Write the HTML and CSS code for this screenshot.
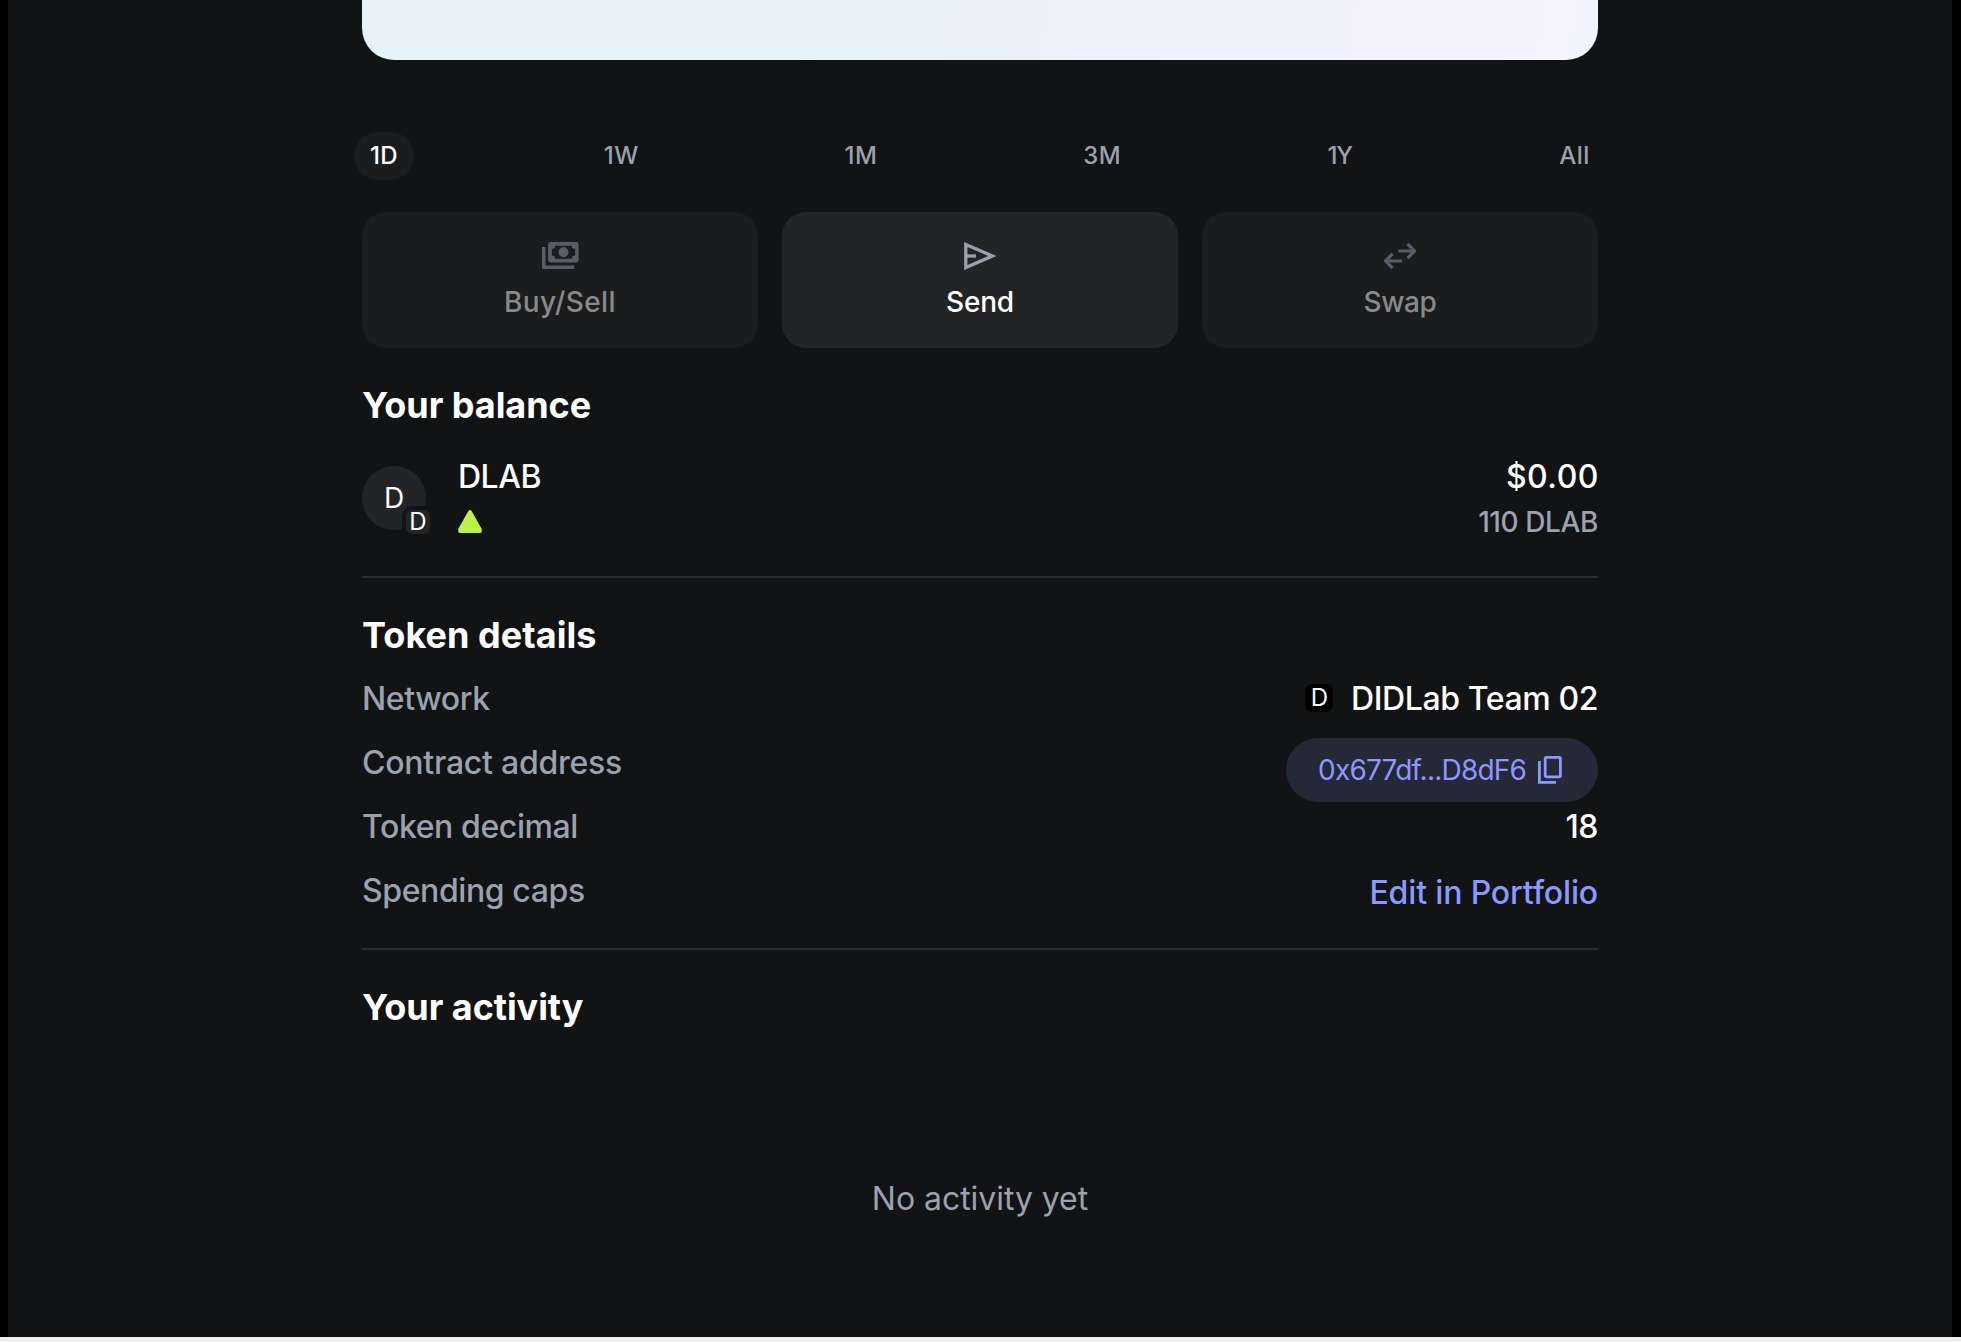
FILE: index.html
```
<!DOCTYPE html>
<html lang="en">
<head>
<meta charset="utf-8">
<title>DLAB</title>
<link rel="stylesheet" href="styles.css">
</head>
<body>
<main class="page">
  <div class="content">
    <div class="chart"></div>

    <nav class="ranges">
      <button class="range range-active">1D</button>
      <button class="range">1W</button>
      <button class="range">1M</button>
      <button class="range">3M</button>
      <button class="range">1Y</button>
      <button class="range">All</button>
    </nav>

    <div class="actions">
      <button class="action action-disabled">
        <svg width="37" height="28" viewBox="0 0 37 28" fill="currentColor">
          <path fill-rule="evenodd" d="M8.5 0H34.2Q36.6 0 36.6 2.4V18Q36.6 20.4 34.2 20.4H8.5Q6.1 20.4 6.1 18V2.4Q6.1 0 8.5 0ZM13.2 3.7Q13.2 7 9.9 7V13.4Q13.2 13.4 13.2 16.7H29.8Q29.8 13.4 33.1 13.4V7Q29.8 7 29.8 3.7Z"/>
          <circle cx="21.5" cy="10.2" r="5"/>
          <path d="M0 5H3.5V23.5H32.3V27H1.6Q0 27 0 25.4Z"/>
        </svg>
        <span>Buy/Sell</span>
      </button>
      <button class="action">
        <svg width="32" height="28" viewBox="0 0 32 28" fill="none" stroke="currentColor" stroke-width="3.3">
          <path d="M1.8 2.4L28.3 14L1.8 25.6Z"/>
          <path d="M2 14H12"/>
        </svg>
        <span>Send</span>
      </button>
      <button class="action action-disabled action-swap">
        <svg width="32" height="28" viewBox="0 0 32 28" fill="none" stroke="currentColor" stroke-width="3.2">
          <path d="M14.3 9H30M23.5 1.8L30.7 9L23.5 16.2"/>
          <path d="M18 19H2M8.7 11.8L1.5 19L8.7 26.2"/>
        </svg>
        <span>Swap</span>
      </button>
    </div>

    <section class="balance">
      <h2>Your balance</h2>
      <div class="asset">
        <div class="avatar">D<span class="badge">D</span></div>
        <div class="asset-name">
          <div class="primary">DLAB</div>
          <div class="secondary trend">
            <svg width="24" height="24" viewBox="0 0 24 24" fill="#baf24a"><path d="M10.1 1.4Q12-1.2 13.9 1.4L23.5 18.6Q24.6 23 22 23H2Q-.6 23 .5 18.6Z"/></svg>
          </div>
        </div>
        <div class="asset-value">
          <div class="primary fiat">$0.00</div>
          <div class="secondary">110 DLAB</div>
        </div>
      </div>
    </section>

    <section class="details">
      <h2>Token details</h2>
      <dl class="rows">
        <div class="row"><dt>Network</dt><dd class="network"><span class="network-icon">D</span>DIDLab Team 02</dd></div>
        <div class="row"><dt>Contract address</dt><dd><button class="address"><span>0x677df...D8dF6</span>
          <svg width="24" height="28" viewBox="0 0 24 28" fill="none" stroke="currentColor" stroke-width="2.8"><rect x="7.2" y="1.4" width="15.2" height="19.4" rx="1.2"/><path d="M1.4 5V26.4H18"/></svg>
        </button></dd></div>
        <div class="row"><dt>Token decimal</dt><dd>18</dd></div>
        <div class="row"><dt>Spending caps</dt><dd class="link">Edit in Portfolio</dd></div>
      </dl>
    </section>

    <section class="activity">
      <h2>Your activity</h2>
      <p class="empty">No activity yet</p>
    </section>
  </div>
</main>
</body>
</html>
```
FILE: styles.css
```
* { box-sizing: border-box; }

body {
  margin: 0;
  background: #f0f0f0;
  font-family: Inter, "Liberation Sans", sans-serif;
  color: #fff;
}

h2, p, dl, dd { margin: 0; }

svg { display: block; flex: none; }

button {
  border: 0;
  padding: 0;
  margin: 0;
  font: inherit;
  color: inherit;
}

.page {
  height: 1337px;
  border: solid #000;
  border-width: 0 9px 0 8px;
  background: #121314;
  padding-left: 354px;
}

.content { width: 1236px; }

.chart {
  height: 60px;
  border-radius: 0 0 32px 32px;
  background: linear-gradient(98deg, #e6f1f8 0%, #e6f1f8 34%, #e6f2f7 39%, #e9f1f8 46%, #eef1fb 60%, #f1f1fd 78%, #f4f1fe 88%, #f3f3ff 100%);
}

.ranges {
  display: flex;
  justify-content: space-between;
  margin: 72px -8px 0;
}

.range {
  width: 60px;
  height: 48px;
  border-radius: 24px;
  background: none;
  font-size: 24px;
  font-weight: 500;
  line-height: 48px;
  letter-spacing: 0.4px;
  color: #9ca1af;
}

.range:nth-child(2) { width: 66px; }
.range:nth-child(3) { width: 65px; }
.range:nth-child(4) { width: 69px; }
.range:nth-child(5) { width: 58px; letter-spacing: -1px; }
.range:nth-child(6) { width: 63px; }
.range-active { background: #1b1c1d; color: #fff; }

.actions {
  display: grid;
  grid-template-columns: repeat(3, 1fr);
  gap: 24px;
  margin-top: 32px;
}

.action {
  display: flex;
  flex-direction: column;
  align-items: center;
  gap: 10px;
  height: 136px;
  padding-top: 30px;
  border-radius: 24px;
  background: #232426;
  font-size: 28px;
  font-weight: 500;
  line-height: 44px;
  letter-spacing: -0.2px;
}

.action svg { color: #9b9fad; }
.action-disabled { background: #1b1c1d; color: #898989; }
.action-disabled svg { color: #5a5d65; }
.action-disabled span { letter-spacing: 0.4px; }
.action-swap span { letter-spacing: -0.4px; }

h2 {
  font-size: 36px;
  font-weight: 700;
  line-height: 48px;
  letter-spacing: -0.05px;
}

.balance {
  padding: 33px 0 32px;
  border-bottom: 2px solid #2b2c2e;
}

.asset {
  display: flex;
  align-items: center;
  margin-top: 23px;
}

.avatar {
  position: relative;
  width: 64px;
  height: 64px;
  margin-right: 32px;
  border-radius: 50%;
  background: #232426;
  font-size: 28px;
  line-height: 64px;
  text-align: center;
}

/* network badge over the token avatar */
.badge {
  position: absolute;
  right: -8px;
  bottom: -8px;
  width: 32px;
  height: 32px;
  border: 4px solid #121314;
  border-radius: 10px;
  background: #232426;
  font-size: 24px;
  line-height: 24px;
}

.primary {
  height: 48px;
  font-size: 32px;
  font-weight: 500;
  line-height: 50px;
  letter-spacing: -0.5px;
}

.fiat { letter-spacing: 0.5px; margin-right: -1px; }

.secondary {
  height: 44px;
  font-size: 28px;
  font-weight: 500;
  line-height: 44px;
  letter-spacing: -0.4px;
  color: #9ca1af;
}

.trend { padding-top: 10px; }

.asset-value { margin-left: auto; text-align: right; }

.details {
  padding: 33px 0 18px;
  border-bottom: 2px solid #2b2c2e;
}

.details h2 { letter-spacing: 0.05px; }

.rows { margin-top: 15px; }

.row {
  display: flex;
  justify-content: space-between;
  height: 64px;
  font-size: 32px;
  font-weight: 500;
  line-height: 50px;
  letter-spacing: -0.4px;
}

.row dt { color: #9ca1af; }
.row:nth-child(2) dt { letter-spacing: -0.25px; }

.network { display: flex; }

.network-icon {
  width: 28px;
  height: 28px;
  margin: 10px 18px 0 0;
  border-radius: 7px;
  background: #000;
  font-size: 24px;
  font-weight: 400;
  line-height: 27px;
  text-align: center;
}

.address {
  display: flex;
  align-items: center;
  justify-content: space-between;
  width: 312px;
  height: 64px;
  padding: 0 36px 0 32px;
  border-radius: 32px;
  background: #252836;
  font-size: 28px;
  font-weight: 400;
  letter-spacing: -0.78px;
  color: #8b99ff;
}

.link { padding-top: 2px; letter-spacing: -0.15px; color: #8b99ff; }

.activity { padding-top: 33px; }

.empty {
  margin-top: 143px;
  font-size: 32px;
  line-height: 50px;
  letter-spacing: -0.05px;
  text-align: center;
  color: #9ca1af;
}
```
